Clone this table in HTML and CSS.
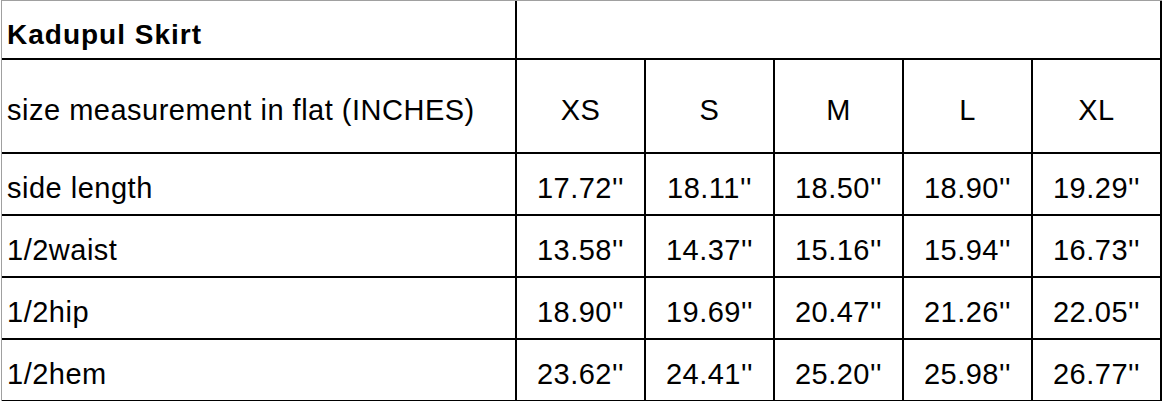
FILE: index.html
```html
<!DOCTYPE html>
<html>
<head>
<meta charset="utf-8">
<link rel="stylesheet" href="styles.css">
</head>
<body>
<table class="sheet">
  <colgroup>
    <col class="c-label">
    <col class="c-size"><col class="c-size"><col class="c-size"><col class="c-size"><col class="c-size">
  </colgroup>
  <tr class="r-title">
    <td class="title">Kadupul Skirt</td>
    <td colspan="5"></td>
  </tr>
  <tr class="r-head">
    <td class="label">size measurement in flat (INCHES)</td>
    <td>XS</td><td>S</td><td>M</td><td>L</td><td>XL</td>
  </tr>
  <tr class="r-data">
    <td class="label">side length</td>
    <td>17.72''</td><td>18.11''</td><td>18.50''</td><td>18.90''</td><td>19.29''</td>
  </tr>
  <tr class="r-data">
    <td class="label">1/2waist</td>
    <td>13.58''</td><td>14.37''</td><td>15.16''</td><td>15.94''</td><td>16.73''</td>
  </tr>
  <tr class="r-data">
    <td class="label">1/2hip</td>
    <td>18.90''</td><td>19.69''</td><td>20.47''</td><td>21.26''</td><td>22.05''</td>
  </tr>
  <tr class="r-data">
    <td class="label">1/2hem</td>
    <td>23.62''</td><td>24.41''</td><td>25.20''</td><td>25.98''</td><td>26.77''</td>
  </tr>
</table>
</body>
</html>
```
FILE: styles.css
```css
html, body {
  margin: 0;
  padding: 0;
  background: #ffffff;
}
body {
  padding-left: 1px;
}
.sheet {
  border-collapse: separate;
  border-spacing: 0;
  border-top: 1px solid #a0a0a0;
  border-left: 1px solid #a0a0a0;
  table-layout: fixed;
  width: 1161px;
  font-family: "Liberation Sans", Arial, sans-serif;
  font-size: 29px;
  letter-spacing: 0.5px;
  color: #000;
}
.c-label { width: 515px; }
.c-size { width: 129px; }
.sheet td {
  border-right: 2px solid #000;
  border-bottom: 2px solid #000;
  padding: 8px 0 0 0;
  line-height: 32px;
  text-align: center;
  vertical-align: middle;
  white-space: nowrap;
  overflow: hidden;
}
.sheet td.label,
.sheet td.title {
  text-align: left;
  padding-left: 5px;
}
.sheet td.title {
  font-weight: bold;
  font-size: 28px;
  letter-spacing: 1px;
  padding-top: 10px;
}
.r-title td { height: 47px; }
.r-head td { height: 84px; }
.r-data td { height: 52px; }
```
